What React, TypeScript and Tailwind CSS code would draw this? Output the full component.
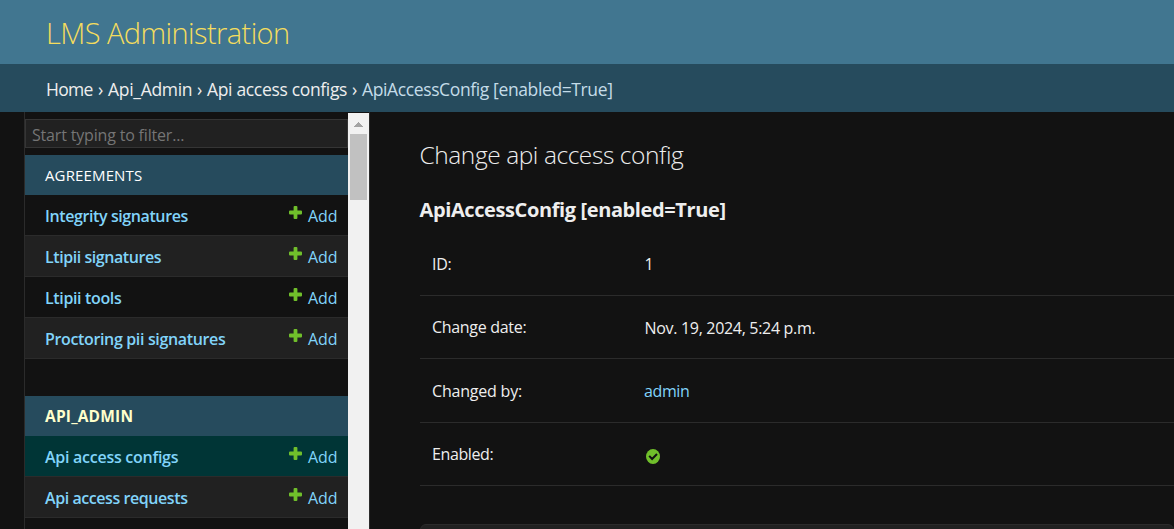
type Model = { name: string; row: string; spacing: string };

const agreementModels: Model[] = [
  { name: 'Integrity signatures', row: 'bg-[#121212]', spacing: 'tracking-[-0.4px]' },
  { name: 'Ltipii signatures', row: 'bg-[#212121]', spacing: 'tracking-[-0.44px]' },
  { name: 'Ltipii tools', row: 'bg-[#121212]', spacing: 'tracking-[-0.36px]' },
  { name: 'Proctoring pii signatures', row: 'bg-[#212121]', spacing: 'tracking-[-0.35px]' },
];

const apiModels: Model[] = [
  { name: 'Api access configs', row: 'bg-[#003536]', spacing: 'tracking-[-0.27px]' },
  { name: 'Api access requests', row: 'bg-[#212121]', spacing: 'tracking-[-0.43px]' },
];

function ModelRow({ model }: { model: Model }) {
  return (
    <li className={`flex h-[41px] items-center justify-between border-b border-[#2b2b2b] pt-[2px] pr-[11px] pl-5 text-[#81d4fa] ${model.row}`}>
      <a className={`whitespace-nowrap font-semibold ${model.spacing}`}>{model.name}</a>
      <a className="flex items-center gap-[6px]">
        <svg className="mb-[7px] size-[13px]" viewBox="0 0 13 13" fill="#70bf2b">
          <path d="M5.600 0h1.800a1 1 0 0 1 1 1v3.600H12a1 1 0 0 1 1 1v1.800a1 1 0 0 1-1 1H8.400V12a1 1 0 0 1-1 1H5.600a1 1 0 0 1-1-1V8.400H1a1 1 0 0 1-1-1V5.600a1 1 0 0 1 1-1h3.600V1a1 1 0 0 1 1-1z" />
        </svg>
        <span className="w-[29px] tracking-[-0.1px] whitespace-nowrap">Add</span>
      </a>
    </li>
  );
}

function Sidebar() {
  return (
    <nav className="flex w-[346px] shrink-0 border-x border-[#2b2b2b]">
      <div className="w-[323px] shrink-0 pt-[7px]">
        <div className="flex h-[29px] items-center border border-[#353535] bg-[#212121] pt-[3px] pl-[6px] text-[#757575]">
          <span className="tracking-[-0.18px] whitespace-nowrap">Start typing to filter...</span>
        </div>
        <h3 className="mt-[7px] flex h-10 items-center bg-[#264b5d] pl-5 text-[15px] text-white">
          <span className="tracking-[0.14px]">AGREEMENTS</span>
        </h3>
        <ul>{agreementModels.map((m) => <ModelRow key={m.name} model={m} />)}</ul>
        <h3 className="mt-[37px] flex h-10 items-center bg-[#264b5d] pl-5 text-[15.5px] font-bold text-[#ffffcc]">
          <span className="tracking-[0.2px]">API_ADMIN</span>
        </h3>
        <ul>{apiModels.map((m) => <ModelRow key={m.name} model={m} />)}</ul>
      </div>
      <div className="mt-px flex w-[21px] flex-col items-center bg-[#f1f1f1]">
        <svg className="mt-[9px] h-[5px] w-[9px]" viewBox="0 0 9 5" shapeRendering="crispEdges">
          <path d="M4.500 0L9 5H0z" fill="#a3a3a3" />
        </svg>
        <div className="mt-[7px] mr-px h-[66px] w-[17px] bg-[#c1c1c1]" />
      </div>
    </nav>
  );
}

export default function App() {
  return (
    <div className="flex h-[529px] w-[1174px] flex-col overflow-hidden bg-[#121212] font-['Open_Sans','Noto_Sans',sans-serif] text-base leading-6 text-[#eee]">
      <header className="flex h-16 shrink-0 items-center bg-[#417690] pt-[2px] pl-[46px]">
        <h1 className="text-[29px] leading-9 font-light tracking-[-0.58px] whitespace-nowrap text-[#f5dd5d]">LMS Administration</h1>
      </header>
      <div className="flex h-12 shrink-0 items-center bg-[#264b5d] pt-[2px] pl-[46px] text-[17.5px] whitespace-nowrap">
        <span className="w-[52px] tracking-[-0.7px]">Home</span>
        <span className="w-[10px]">›</span>
        <span className="w-[89px] tracking-[-0.3px]">Api_Admin</span>
        <span className="w-[10px]">›</span>
        <span className="w-[145px] tracking-[-0.33px]">Api access configs</span>
        <span className="w-[10px]">›</span>
        <span className="tracking-[-0.38px] text-[#c4dce8]">ApiAccessConfig [enabled=True]</span>
      </div>
      <div className="flex h-[417px] shrink-0 pl-6">
        <Sidebar />
        <main className="min-w-0 flex-1 pl-[49.5px] whitespace-nowrap">
          <h2 className="mt-[25px] h-9 text-[24.5px] leading-9 font-light tracking-[-0.43px]">Change api access config</h2>
          <h3 className="mt-[23px] h-7 text-xl leading-7 font-bold tracking-[-0.39px]">ApiAccessConfig [enabled=True]</h3>
          <div className="mt-2 flex h-16 items-center border-b border-[#2b2b2b] pl-[12.5px] tracking-[-0.31px]">
            <span className="w-[212.5px]">ID:</span>
            <span>1</span>
          </div>
          <div className="flex h-[63px] items-center border-b border-[#2b2b2b] pl-[12.5px] tracking-[-0.31px]">
            <span className="w-[212.5px]">Change date:</span>
            <span className="mt-[2px]">Nov. 19, 2024, 5:24 p.m.</span>
          </div>
          <div className="flex h-16 items-center border-b border-[#2b2b2b] pl-[12.5px]">
            <span className="w-[212px] tracking-[-0.2px]">Changed by:</span>
            <a className="tracking-[-0.4px] text-[#81d4fa]">admin</a>
          </div>
          <div className="flex h-[63px] items-center border-b border-[#2b2b2b] pl-[12.5px]">
            <span className="w-[214px] tracking-[-0.4px]">Enabled:</span>
            <svg className="mt-1 h-[15px] w-[14px]" viewBox="0 0 14 15">
              <ellipse cx="7" cy="7.5" rx="7" ry="7.500" fill="#70bf2b" />
              <path d="M3.200 6.900l2.900 3.100 4.900-5" fill="none" stroke="#121212" strokeWidth="2" />
            </svg>
          </div>
          <div className="mt-[38px] h-20 rounded-md border border-[#2b2b2b] bg-[#212121]" />
        </main>
      </div>
    </div>
  );
}
